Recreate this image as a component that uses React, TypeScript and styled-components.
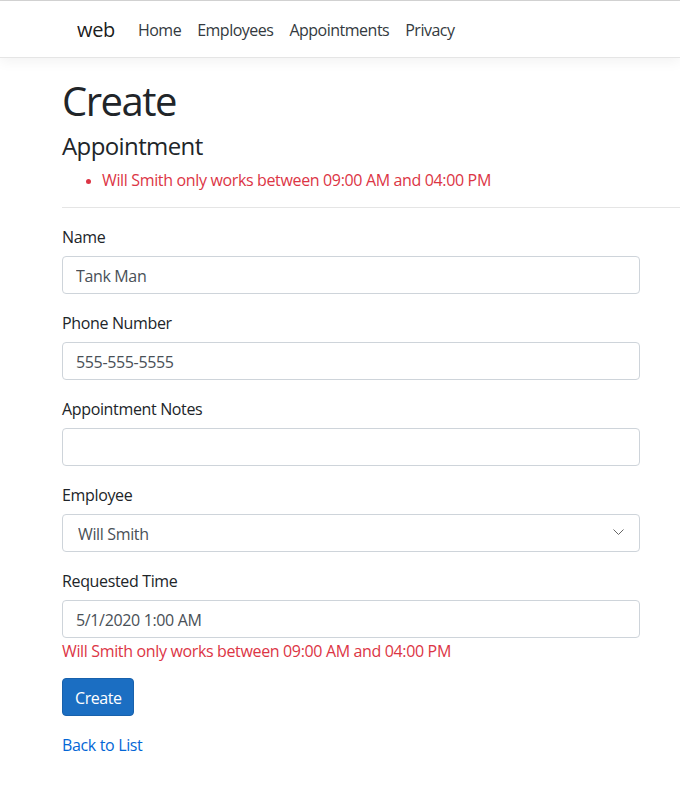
import React from "react";
import styled, { createGlobalStyle } from "styled-components";

const FONT = `"Open Sans", "Noto Sans", sans-serif`;

const Global = createGlobalStyle`
  html, body { margin: 0; padding: 0; background: #fff; }
  body {
    font-family: ${FONT};
    font-size: 16px;
    line-height: 1.5;
    letter-spacing: -0.35px;
    color: #212529;
    overflow-x: hidden;
  }
  *, *::before, *::after { box-sizing: border-box; }
`;

const Page = styled.div`
  border-top: 1px solid #d4d4d4;
`;

const NavBar = styled.nav`
  display: flex;
  align-items: center;
  padding: 8px 0 8px 77px;
  background: #fff;
  border-bottom: 1px solid #e5e5e5;
  box-shadow: 0 4px 12px rgba(0, 0, 0, 0.05);
  margin-bottom: 16px;
`;

const Brand = styled.a`
  font-size: 20px;
  line-height: 30px;
  padding: 6px 0 4px;
  margin-right: 15px;
  color: rgba(0, 0, 0, 0.9);
  text-decoration: none;
`;

const NavList = styled.ul`
  display: flex;
  list-style: none;
  margin: 0;
  padding: 0;
`;

const NavLink = styled.a`
  display: block;
  padding: 9px 8px 7px;
  color: #343a40;
  text-decoration: none;
  font-size: 16px;
  line-height: 24px;
  letter-spacing: -0.5px;
`;

const Main = styled.main`
  padding-left: 62px;
  padding-bottom: 40px;
`;

const Title = styled.h1`
  font-size: 40px;
  font-weight: 400;
  line-height: 1.2;
  letter-spacing: -1.5px;
  padding-top: 3px;
  margin: 0 0 7px;
`;

const Subtitle = styled.h4`
  font-size: 24px;
  font-weight: 400;
  line-height: 1.2;
  letter-spacing: -0.6px;
  margin: 0 0 7px;
`;

const Summary = styled.ul`
  color: #dc3545;
  margin: 0 0 15px;
  padding-left: 40px;
  li::marker { font-size: 13px; }
`;

const Rule = styled.hr`
  border: 0;
  border-top: 1px solid rgba(0, 0, 0, 0.1);
  margin: 0 0 16px;
`;

const Form = styled.form`
  width: 578px;
`;

const Group = styled.div`
  margin-bottom: 16px;
`;

const Label = styled.label`
  display: block;
  padding-top: 1px;
  margin-bottom: 7px;
`;

const Input = styled.input`
  display: block;
  width: 100%;
  height: 38px;
  padding: 7px 13px 5px;
  font-family: ${FONT};
  font-size: 16px;
  line-height: 1.5;
  letter-spacing: -0.35px;
  color: #495057;
  background: #fff;
  border: 1px solid #ced4da;
  border-radius: 4px;
  outline: none;
`;

const SelectWrap = styled.div`
  position: relative;
`;

const Select = styled.select`
  display: block;
  width: 100%;
  height: 38px;
  padding: 7px 40px 5px 15px;
  font-family: ${FONT};
  font-size: 16px;
  line-height: 1.5;
  letter-spacing: -0.35px;
  color: #495057;
  background: #fff;
  border: 1px solid #ced4da;
  border-radius: 4px;
  appearance: none;
  -webkit-appearance: none;
  outline: none;
`;

const Chevron = styled.svg`
  position: absolute;
  right: 16px;
  top: 15px;
  pointer-events: none;
`;

const FieldError = styled.span`
  display: block;
  padding-top: 1px;
  margin-bottom: -1px;
  color: #dc3545;
`;

const Button = styled.button`
  display: inline-block;
  height: 38px;
  padding: 7px 12px 5px;
  font-family: ${FONT};
  font-size: 16px;
  line-height: 1.5;
  letter-spacing: -0.45px;
  color: #fff;
  background: #1b6ec2;
  border: 1px solid #1861ac;
  border-radius: 4px;
  cursor: pointer;
`;

const Footer = styled.div`
  padding-top: 1px;
`;

const BackLink = styled.a`
  color: #0366d6;
  text-decoration: none;
`;

const fields = [
  { label: "Name", value: "Tank Man" },
  { label: "Phone Number", value: "555-555-5555" },
  { label: "Appointment Notes", value: "" },
];

export default function App() {
  const err = "Will Smith only works between 09:00 AM and 04:00 PM";
  return (
    <Page>
      <Global />
      <NavBar>
        <Brand href="#">web</Brand>
        <NavList>
          {["Home", "Employees", "Appointments", "Privacy"].map((t) => (
            <li key={t}>
              <NavLink href="#">{t}</NavLink>
            </li>
          ))}
        </NavList>
      </NavBar>
      <Main>
        <Title>Create</Title>
        <Subtitle>Appointment</Subtitle>
        <Summary>
          <li>{err}</li>
        </Summary>
        <Rule />
        <Form onSubmit={(e) => e.preventDefault()}>
          {fields.map((f) => (
            <Group key={f.label}>
              <Label>{f.label}</Label>
              <Input defaultValue={f.value} />
            </Group>
          ))}
          <Group>
            <Label>Employee</Label>
            <SelectWrap>
              <Select defaultValue="1">
                <option value="1">Will Smith</option>
              </Select>
              <Chevron width="11" height="6" viewBox="0 0 11 6">
                <path d="M0.5 0.5 L5.5 5.5 L10.5 0.5" fill="none" stroke="#666" strokeWidth="1" />
              </Chevron>
            </SelectWrap>
          </Group>
          <Group>
            <Label>Requested Time</Label>
            <Input defaultValue="5/1/2020 1:00 AM" />
            <FieldError>{err}</FieldError>
          </Group>
          <Group>
            <Button type="submit">Create</Button>
          </Group>
        </Form>
        <Footer>
          <BackLink href="#">Back to List</BackLink>
        </Footer>
      </Main>
    </Page>
  );
}
